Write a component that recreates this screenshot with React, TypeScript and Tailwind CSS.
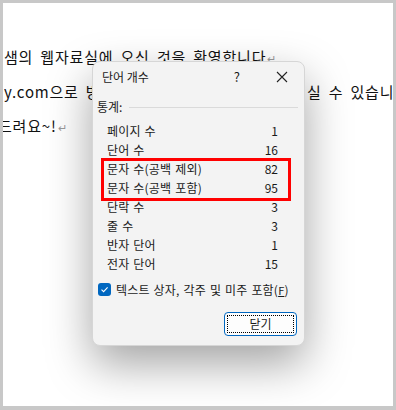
import React from "react";

const stats: [string, string][] = [
  ["페이지 수", "1"],
  ["단어 수", "16"],
  ["문자 수(공백 제외)", "82"],
  ["문자 수(공백 포함)", "95"],
  ["단락 수", "3"],
  ["줄 수", "3"],
  ["반자 단어", "1"],
  ["전자 단어", "15"],
];

const Mark = () => <span className="text-[11px] text-[#9a9a9a] ml-[1px] tracking-normal">↵</span>;

const WordCountDialog = () => {
  return (
    <div className="absolute left-[89px] top-[58px] w-[213px] h-[285px] rounded-[8px] bg-[#f3f3f3] border border-[#d6d6d6] shadow-[0_18px_45px_rgba(0,0,0,0.36)] text-[12px] text-[#1a1a1a] flex flex-col">
      <div className="flex items-center h-[29px] pl-[9px]">
        <span className="leading-[16px]">단어 개수</span>
        <span className="ml-auto mr-[36px] text-[13px]">?</span>
        <svg width="12" height="12" viewBox="0 0 12 12" className="mr-[16px]">
          <path d="M1 1 L11 11 M11 1 L1 11" stroke="#222" strokeWidth="1.1" fill="none" />
        </svg>
      </div>
      <div className="flex items-center gap-[4px] pl-[4px] pr-[6px] mt-[7px] h-[18px]">
        <span className="leading-[16px]">통계:</span>
        <div className="flex-1 h-px bg-[#dadada] ml-[3px]" />
      </div>
      <div className="relative flex flex-col mt-[5px] pl-[14px] pr-[26px]">
        {stats.map(([label, value]) => (
          <div key={label} className="flex items-center justify-between h-[19.1px]">
            <span className="tracking-[0.2px] [word-spacing:1px]">{label}</span>
            <span>{value}</span>
          </div>
        ))}
        <div className="absolute left-[8px] top-[37px] w-[190px] h-[43px] border-[3px] border-[#ff0000]" />
      </div>
      <label className="flex items-center gap-[5px] pl-[5px] mt-[7px]">
        <span className="w-[13px] h-[13px] rounded-[3px] bg-[#0067c0] flex items-center justify-center">
          <svg width="9" height="9" viewBox="0 0 9 9">
            <path d="M1.5 4.6 L3.6 6.6 L7.6 2.4" stroke="#fff" strokeWidth="1.1" fill="none" />
          </svg>
        </span>
        <span className="whitespace-nowrap tracking-[0.2px] [word-spacing:1px]">
          텍스트 상자, 각주 및 미주 포함(<span className="underline text-[11px]">F</span>)
        </span>
      </label>
      <div className="flex justify-end mt-auto mb-[9px] mr-[7px]">
        <button className="w-[73px] h-[24px] rounded-[4px] border border-[#0067c0] bg-[#fdfdfd] p-[2px]">
          <div className="w-full h-full border border-dotted border-[#000] flex items-center justify-center leading-none">
            닫기
          </div>
        </button>
      </div>
    </div>
  );
};

export default function App() {
  return (
    <div className="w-[396px] h-[410px] bg-[#c8c8c8] font-['Noto_Sans_CJK_KR',sans-serif]">
      <div className="relative w-[390px] h-[403px] ml-[3px] mt-[3px] inline-block align-top bg-white overflow-hidden">
        <div className="pt-[37px] pl-[1px] text-[15px] leading-[34px] tracking-[0.8px] [word-spacing:3px] text-[#111] whitespace-nowrap">
          <div>
            샘의 웹자료실에 오신 것을 환영합니다
            <Mark />
          </div>
          <div className="flex">
            <span className="inline-block shrink-0 w-[303px] overflow-hidden">y.com으로 방문하시면 더 많은 자료를 받으</span>
            <span className="shrink-0">실 수 있습니다</span>
          </div>
          <div className="-ml-[6px]">
            드려요~!
            <Mark />
          </div>
        </div>
        <WordCountDialog />
      </div>
    </div>
  );
}
